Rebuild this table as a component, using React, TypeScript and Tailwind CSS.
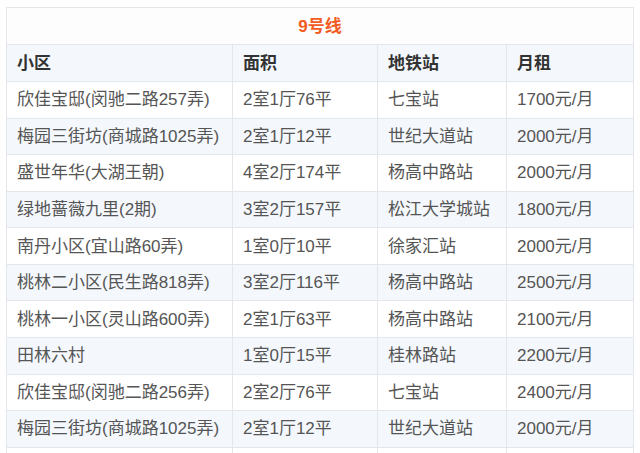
import React from "react";

const rows: [string, string, string, string][] = [
  ["欣佳宝邸(闵驰二路257弄)", "2室1厅76平", "七宝站", "1700元/月"],
  ["梅园三街坊(商城路1025弄)", "2室1厅12平", "世纪大道站", "2000元/月"],
  ["盛世年华(大湖王朝)", "4室2厅174平", "杨高中路站", "2000元/月"],
  ["绿地蔷薇九里(2期)", "3室2厅157平", "松江大学城站", "1800元/月"],
  ["南丹小区(宜山路60弄)", "1室0厅10平", "徐家汇站", "2000元/月"],
  ["桃林二小区(民生路818弄)", "3室2厅116平", "杨高中路站", "2500元/月"],
  ["桃林一小区(灵山路600弄)", "2室1厅63平", "杨高中路站", "2100元/月"],
  ["田林六村", "1室0厅15平", "桂林路站", "2200元/月"],
  ["欣佳宝邸(闵驰二路256弄)", "2室2厅76平", "七宝站", "2400元/月"],
  ["梅园三街坊(商城路1025弄)", "2室1厅12平", "世纪大道站", "2000元/月"],
  ["", "", "", ""],
];

export default function App() {
  return (
    <div
      className="w-[640px] h-[453px] overflow-hidden bg-white pt-[7px] pl-[6px]"
      style={{ fontFamily: '"Liberation Sans", "Noto Sans CJK SC", sans-serif' }}
    >
      <table className="w-[627px] border-collapse table-fixed text-[17px] leading-none">
        <colgroup>
          <col className="w-[226px]" />
          <col className="w-[145px]" />
          <col className="w-[129px]" />
          <col className="w-[127px]" />
        </colgroup>
        <thead>
          <tr className="h-[37px] bg-[#fdfdfd]">
            <th
              colSpan={4}
              className="border border-[#e3e7ec] text-center font-bold text-[17px] text-[#f25b22]"
            >
              9号线
            </th>
          </tr>
          <tr className="h-[37px] bg-[#f4f8fc]">
            {["小区", "面积", "地铁站", "月租"].map((h) => (
              <th
                key={h}
                className="border border-[#e3e7ec] text-left font-bold text-[#333333] pl-[10px]"
              >
                {h}
              </th>
            ))}
          </tr>
        </thead>
        <tbody>
          {rows.map((r, i) => (
            <tr
              key={i}
              className={`h-[36.57px] ${i % 2 === 1 ? "bg-[#f4f8fc]" : "bg-white"}`}
            >
              {r.map((c, j) => (
                <td
                  key={j}
                  className="border border-[#e3e7ec] pl-[10px] text-[#555555] whitespace-nowrap"
                >
                  {c}
                </td>
              ))}
            </tr>
          ))}
        </tbody>
      </table>
    </div>
  );
}
